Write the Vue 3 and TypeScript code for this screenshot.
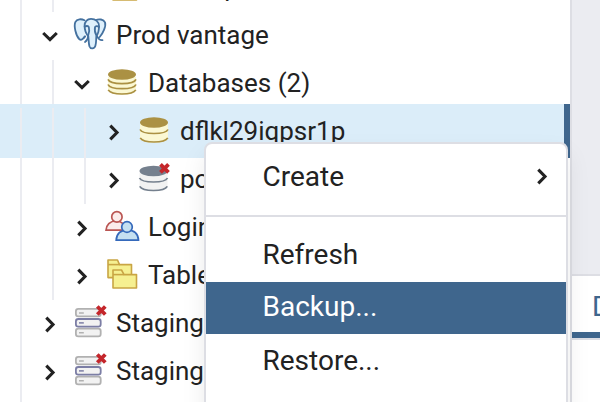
<script setup lang="ts">
type IconName = 'elephant' | 'databases' | 'database' | 'database-off' | 'roles' | 'tablespaces' | 'server-off'

interface TreeRow {
  id: number
  label: string
  depth: number
  icon?: IconName
  open?: boolean
  leaf?: boolean
  selected?: boolean
}

interface MenuItem {
  label: string
  submenu?: boolean
  active?: boolean
  divided?: boolean
  spaced?: boolean
}

const rows: TreeRow[] = [
  { id: 0, label: 'Tablespaces', depth: 1, icon: 'tablespaces', leaf: true },
  { id: 1, label: 'Prod vantage', depth: 0, icon: 'elephant', open: true },
  { id: 2, label: 'Databases (2)', depth: 1, icon: 'databases', open: true },
  { id: 3, label: 'dflkl29iqpsr1p', depth: 2, icon: 'database', selected: true },
  { id: 4, label: 'postgres', depth: 2, icon: 'database-off' },
  { id: 5, label: 'Login/Group Roles', depth: 1, icon: 'roles' },
  { id: 6, label: 'Tablespaces', depth: 1, icon: 'tablespaces' },
  { id: 7, label: 'Staging', depth: 0, icon: 'server-off' },
  { id: 8, label: 'Staging', depth: 0, icon: 'server-off' },
  { id: 9, label: '', depth: 0, leaf: true },
]

const menu: MenuItem[] = [
  { label: 'Create', submenu: true, divided: true },
  { label: 'Refresh' },
  { label: 'Backup...', active: true },
  { label: 'Restore...', spaced: true },
]
</script>

<template>
  <div class="app">
    <div class="tree">
      <div v-for="row in rows" :key="row.id" class="row" :class="{ selected: row.selected }">
        <i v-for="n in row.depth" :key="n" class="guide"></i>
        <i class="guide last"></i>
        <svg class="chevron" viewBox="0 0 20 20">
          <path v-if="row.open" d="M3.2 7 10 13.500l6.800-6.500" />
          <path v-else-if="!row.leaf" d="M6.300 3.700 13 10.500 6.300 17.300" />
        </svg>
        <svg class="icon" viewBox="0 0 36 36">
          <g v-if="row.icon === 'elephant'" class="elephant" transform="translate(0 -2)">
            <path d="M12.5 4.2C9.5 2.8 5 2.6 3.3 6.2 1.7 10 3.8 19.6 7.2 23c2.2 2 4-.3 5.6-2.6" />
            <path d="M23.5 4.2c3.5-1.6 8-1 9.5 2.2 1.3 3.6-1.9 10.8-5.3 14.6" />
            <path d="M12.6 9.6c0-3.4 2.4-6.8 6.4-6.8 4.6 0 8 3 8 7.2 0 3.8-.6 7.4-2.6 10.2-.4 3.600 0 6.400-1 9.600-.9 3.300-5 3.400-6 .4-1-3.900-.6-7.200-1.200-9.900-2.200-2.500-3.600-6.800-3.600-10.700Z" />
            <path class="line" d="M12.600 10.800c1.600-1.200 3.700-1 4.200.2.7 2.200.4 5.400-.6 8.200M27 11c-1.600-1.200-3.500-1-4 .2-.6 2.600.2 6.200 1.700 8.800M13.200 20.400l-1.700 1.700M16.300 20.200c-.5 2.600-1.500 4.800-3.300 5.900M25.300 20.600c1.200 2.400 2.800 3.800 5.200 3.500" />
          </g>
          <g v-else-if="row.icon === 'databases'" class="gold" transform="translate(0 -2)">
            <path class="body" d="M4 13v13c0 2.400 6.200 4.700 14 4.700S32 28.400 32 26V13Z" />
            <path class="band" d="M4 15.400c1 2.600 7 4.200 14 4.200s13-1.600 14-4.200M4 20.500c1 2.600 7 4.200 14 4.200s13-1.600 14-4.200M4.200 25.900c1.600 2.600 7 4.100 13.800 4.100s12.200-1.500 13.800-4.100" />
            <ellipse cx="18" cy="10.500" rx="14" ry="5.300" />
          </g>
          <g v-else-if="row.icon === 'database'" class="gold" transform="translate(0 -2)">
            <path class="body" d="M4 12v14.500c0 2.200 6.200 4.300 14 4.300s14-2.100 14-4.300V12Z" />
            <path class="band" d="M4 17.500c1.200 2.500 7 4 14 4s12.800-1.500 14-4M4.200 25.900c1.600 2.800 7 4.100 13.800 4.100s12.200-1.300 13.800-4.100" />
            <ellipse cx="18" cy="10.500" rx="14" ry="5.300" />
          </g>
          <g v-else-if="row.icon === 'database-off'" class="slate" transform="translate(-.5 -1.500)">
            <path class="body" d="M4 12v14.500c0 2.200 6.200 4.300 14 4.300s14-2.100 14-4.300V12Z" />
            <path class="band" d="M4 17.500c1.200 2.500 7 4 14 4s12.800-1.500 14-4M4.200 25.900c1.600 2.800 7 4.100 13.800 4.100s12.200-1.300 13.800-4.100" />
            <ellipse cx="18" cy="10.500" rx="14" ry="5.300" />
          </g>
          <g v-else-if="row.icon === 'roles'">
            <path class="red" d="M2 20.200c.3-5 3.900-9.200 9.900-9.200s9.600 4.200 9.900 9.200Z" />
            <circle class="red" cx="12.900" cy="6.900" r="5.200" />
            <path class="blue" d="M12.200 30.200c.4-5.700 4-10 11.200-10s10.700 4.300 11.100 10Z" />
            <circle class="blue" cx="23" cy="17" r="5.300" />
          </g>
          <g v-else-if="row.icon === 'tablespaces'" class="folders" transform="translate(0 -2)">
            <path d="M4 21.600V4h9.500l2 4.600h12v13Z" />
            <path d="M4 8.600h11.500" />
            <path d="M9 32V14h8.500l2.500 4.600h12.500V32Z" />
            <path d="M9 18.600h11" />
          </g>
          <g v-else-if="row.icon === 'server-off'" class="server">
            <rect x="3.900" y="2.900" width="24.800" height="7.400" rx="2.400" />
            <rect x="3.900" y="22.700" width="24.800" height="7.600" rx="2.400" />
            <rect class="mid" x="3.900" y="13" width="24.800" height="7.600" rx="2.400" />
            <path d="M7 7h4.800M7 26.800h4.800" />
            <path class="mid" d="M7 16.900h4.800" />
          </g>
          <path v-if="row.icon === 'database-off'" class="cross" d="m24.500 2.300 8 8m0-8-8 8" />
          <path v-if="row.icon === 'server-off'" class="cross" d="m25.300.500 8 8m0-8-8 8" />
        </svg>
        <span class="label">{{ row.label }}</span>
      </div>
    </div>

    <div class="panel">
      <div class="blank"></div>
      <div class="tabs"><span>Dashboard</span></div>
    </div>

    <div class="menu">
      <div
        v-for="item in menu"
        :key="item.label"
        class="item"
        :class="{ active: item.active, divided: item.divided, spaced: item.spaced }"
      >
        <span>{{ item.label }}</span>
        <svg v-if="item.submenu" class="chevron" viewBox="0 0 20 20">
          <path d="M6.300 3.700 13 10.500 6.300 17.300" />
        </svg>
      </div>
    </div>
  </div>
</template>

<style>
body {
  overflow: hidden;
}
</style>

<style scoped>
.app {
  position: relative;
  display: flex;
  width: 600px;
  height: 402px;
  overflow: hidden;
  background: #fff;
  color: #222;
  font-family: Roboto, sans-serif;
}

.tree {
  flex: none;
  width: 570px;
  margin-top: -36px;
  isolation: isolate;
}

.row {
  position: relative;
  display: flex;
  align-items: center;
  height: 48px;
  padding-left: 20px;
}

.row.selected::before {
  content: '';
  position: absolute;
  inset: -4px 0 -2px;
  background: #dbedf9;
  border-right: 6px solid #3f668d;
}

.row > * {
  position: relative;
  flex: none;
}

.guide {
  box-sizing: border-box;
  width: 32px;
  height: 48px;
  border-left: 2px solid #ebecf1;
}

.guide.last {
  width: 20px;
}

.chevron {
  width: 20px;
  height: 20px;
  fill: none;
  stroke: #222;
  stroke-width: 3.1;
  overflow: visible;
}

.icon {
  width: 36px;
  height: 36px;
  margin: 0 8px 0 12px;
  overflow: visible;
}

.label {
  height: 48px;
  font-size: 26px;
  line-height: 46px;
  white-space: nowrap;
}

.elephant path {
  fill: #def0fc;
  stroke: #44719f;
  stroke-width: 1.8;
  stroke-linecap: round;
  stroke-linejoin: round;
}

.elephant .line {
  fill: none;
}

.gold .body {
  fill: #fbf8d3;
}

.gold ellipse {
  fill: #ab9143;
}

.gold .band {
  fill: none;
  stroke: #ab9143;
  stroke-width: 1.7;
}

.slate .body {
  fill: #f2f2f2;
}

.slate ellipse {
  fill: #75808e;
}

.slate .band {
  fill: none;
  stroke: #75808e;
  stroke-width: 1.7;
}

.cross {
  fill: none;
  stroke: #c4262b;
  stroke-width: 3.8;
}

.red {
  fill: #fbeceb;
  stroke: #ba5653;
  stroke-width: 1.7;
}

.blue {
  fill: #c5e0f1;
  stroke: #3569bb;
  stroke-width: 1.7;
}

.folders path {
  fill: #f6f091;
  stroke: #c9a544;
  stroke-width: 1.6;
  stroke-linejoin: round;
}

.server rect {
  fill: #f2f2f2;
  stroke: #b1b1b1;
  stroke-width: 1.8;
}

.server path {
  stroke: #b1b1b1;
  stroke-width: 1.5;
}

.server .mid {
  stroke: #7c7ea5;
}

.panel {
  flex: 1;
  border-left: 2px solid #dddee4;
}

.blank {
  height: 274px;
  background: #ebecf1;
  border-bottom: 2px solid #dddee4;
}

.tabs {
  box-sizing: border-box;
  height: 64px;
  padding-left: 20px;
  border-bottom: 2px solid #dddee4;
  box-shadow: inset 0 -6px #3f668d;
  color: #3f668d;
  font-size: 28px;
  line-height: 61px;
  overflow: hidden;
}

.menu {
  position: absolute;
  top: 142px;
  left: 204px;
  box-sizing: border-box;
  width: 364px;
  height: 300px;
  padding-top: 8px;
  border: 2px solid #dddee4;
  border-radius: 8px;
  background: #fff;
  box-shadow: 0 12px 24px rgba(0, 0, 0, 0.08);
}

.item {
  display: flex;
  justify-content: space-between;
  height: 52px;
  padding: 0 14px 0 56.5px;
  font-size: 28px;
  line-height: 50px;
}

.item .chevron {
  margin-top: 14px;
}

.item.divided {
  padding-bottom: 11px;
  margin-bottom: 13px;
  border-bottom: 2px solid #dddee4;
}

.item.active {
  background: #3f668d;
  color: #fff;
}

.item.spaced {
  padding-top: 2px;
}
</style>
